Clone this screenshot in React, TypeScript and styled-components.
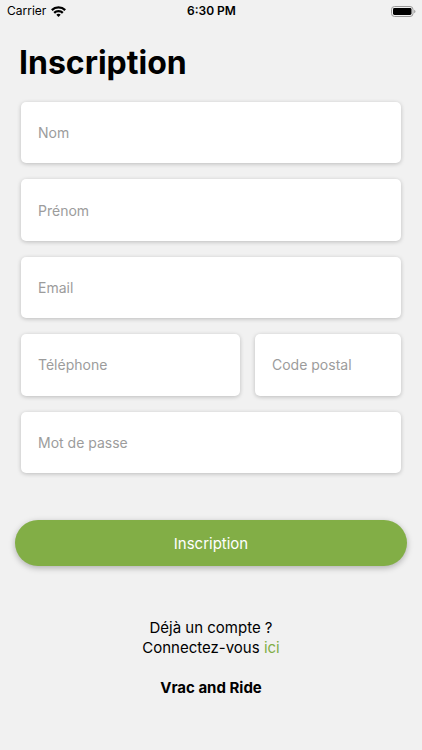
import React from "react";
import styled, { createGlobalStyle } from "styled-components";

const GlobalStyle = createGlobalStyle`
  *, *::before, *::after { box-sizing: border-box; }
  body {
    margin: 0;
    background: #f1f1f1;
    color: #000;
    font-family: Inter, "Liberation Sans", sans-serif;
  }
`;

const Screen = styled.div`
  min-height: 100vh;
  display: flex;
  flex-direction: column;
`;

const StatusBar = styled.header`
  height: 22px;
  padding: 0 6px 0 7px;
  display: grid;
  grid-template-columns: 1fr auto 1fr;
  align-items: center;
  font-size: 12px;
  line-height: 22px;
`;

const Carrier = styled.div`
  display: flex;
  align-items: center;
  gap: 5px;
`;

const Clock = styled.time`
  font-weight: 600;
`;

const BatteryIcon = styled.svg`
  justify-self: end;
`;

const Title = styled.h1`
  margin: 17px 19px 0;
  font-size: 32px;
  line-height: 48px;
  font-weight: 700;
`;

const Form = styled.form`
  display: flex;
  flex-direction: column;
  padding: 0 15px;
`;

const Fields = styled.div`
  min-height: 371px;
  margin: 15px 6px 47px;
  display: grid;
  grid-template-columns: minmax(0, 1fr);
  grid-auto-rows: 1fr;
  gap: 16px;
`;

const FieldRow = styled.div`
  display: grid;
  grid-template-columns: minmax(0, 3fr) minmax(0, 2fr);
  gap: 15px;
`;

const Field = styled.input`
  width: 100%;
  min-width: 0;
  padding: 0 17px;
  border: 0;
  border-radius: 5px;
  background: #fff;
  box-shadow: 0 1px 4px rgba(0, 0, 0, 0.22);
  color: #000;
  font-family: inherit;
  font-size: 14px;
  &::placeholder { color: #9c9c9c; opacity: 1; }
`;

const SubmitButton = styled.button`
  height: 46px;
  border: 0;
  border-radius: 23px;
  background: #82ae46;
  box-shadow: 0 2px 6px rgba(0, 0, 0, 0.28);
  color: #fff;
  font-family: inherit;
  font-size: 15px;
  cursor: pointer;
`;

const Footer = styled.footer`
  margin-top: 52px;
  text-align: center;
  font-size: 15px;
  line-height: 20px;
`;

const Line = styled.p`
  margin: 0;
`;

const LoginLink = styled.a`
  color: #82ae46;
  text-decoration: none;
`;

const Brand = styled.p`
  margin: 20px 0 0;
  font-weight: 700;
`;

type FieldProps = { name: string; label: string; type?: string };

const TextField = ({ name, label, type = "text" }: FieldProps) => (
  <Field name={name} type={type} placeholder={label} aria-label={label} />
);

export default function App() {
  return (
    <Screen>
      <GlobalStyle />
      <StatusBar>
        <Carrier>
          <span>Carrier</span>
          <svg width="15" height="11" viewBox="0 0 15 11" fill="none" stroke="#000" strokeWidth="2.3" aria-hidden="true">
            <path d="M.8 4.1a9.5 9.5 0 0 1 13.4 0" />
            <path d="M3.2 6.9a6.1 6.1 0 0 1 8.6 0" />
            <path d="M7.5 11 5.3 8.8a3.1 3.1 0 0 1 4.4 0Z" fill="#000" stroke="none" />
          </svg>
        </Carrier>
        <Clock>6:30 PM</Clock>
        <BatteryIcon width="25" height="11" viewBox="0 0 25 11" aria-hidden="true">
          <rect x=".5" y=".5" width="21.5" height="10" rx="3" fill="none" stroke="#999" />
          <rect x="2" y="2" width="18.5" height="7" rx="1.4" fill="#000" />
          <path d="M23.2 3.7c1.7.6 1.7 3 0 3.6Z" fill="#999" />
        </BatteryIcon>
      </StatusBar>
      <main>
        <Title>Inscription</Title>
        <Form onSubmit={(event) => event.preventDefault()}>
          <Fields>
            <TextField name="nom" label="Nom" />
            <TextField name="prenom" label="Prénom" />
            <TextField name="email" label="Email" type="email" />
            <FieldRow>
              <TextField name="telephone" label="Téléphone" type="tel" />
              <TextField name="codePostal" label="Code postal" />
            </FieldRow>
            <TextField name="motDePasse" label="Mot de passe" type="password" />
          </Fields>
          <SubmitButton type="submit">Inscription</SubmitButton>
        </Form>
      </main>
      <Footer>
        <Line>Déjà un compte ?</Line>
        <Line>
          Connectez-vous <LoginLink href="#connexion">ici</LoginLink>
        </Line>
        <Brand>Vrac and Ride</Brand>
      </Footer>
    </Screen>
  );
}
